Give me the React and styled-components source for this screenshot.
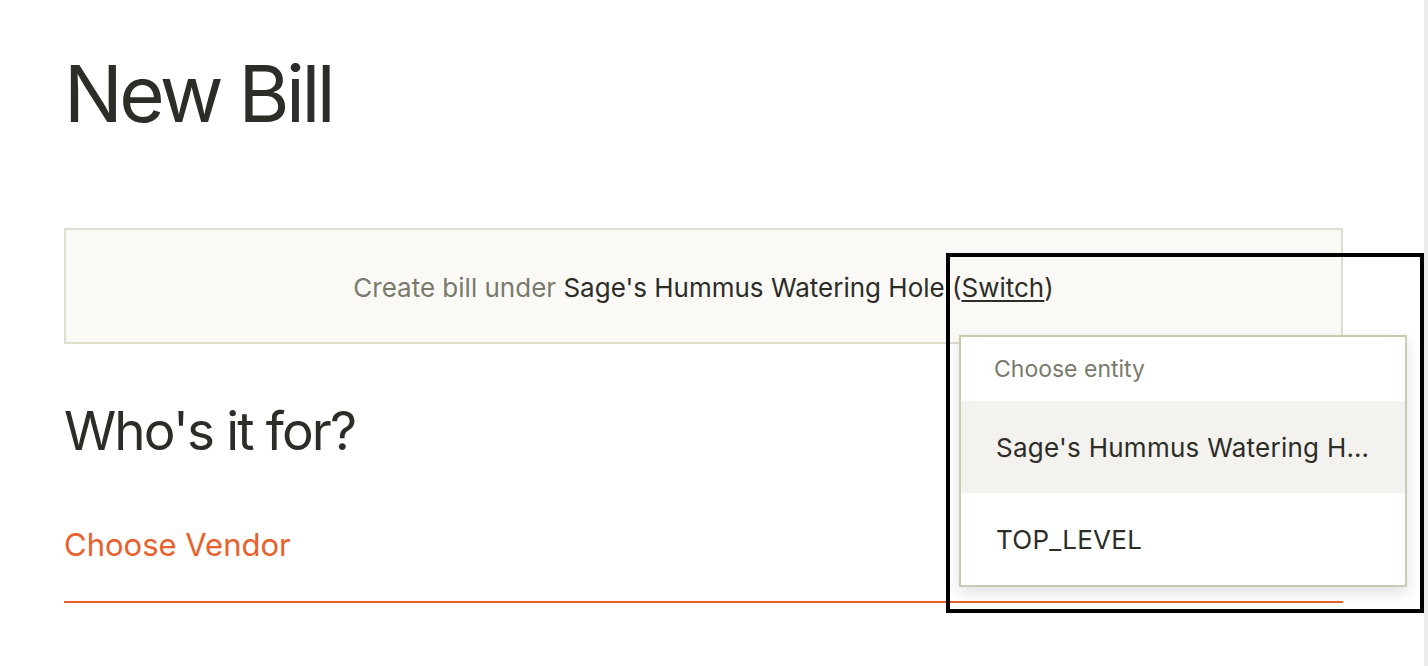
import React from "react";
import styled, { createGlobalStyle } from "styled-components";

const GlobalStyle = createGlobalStyle`
  html, body {
    margin: 0;
    padding: 0;
    background: #ffffff;
    font-family: Inter, "Liberation Sans", sans-serif;
    color: #2d2d27;
  }
  body {
    overflow: hidden;
  }
`;

const entities = ["Sage's Hummus Watering Hole", "TOP_LEVEL"];

export default function App() {
  return (
    <Frame>
      <GlobalStyle />
      <Page>
        <Title>New Bill</Title>

        <EntityBox>
          <EntityLine>
            <Muted>Create bill under </Muted>
            Sage's Hummus Watering Hole (<SwitchLink href="#">Switch</SwitchLink>)
          </EntityLine>

          <Menu>
            <MenuLabel>Choose entity</MenuLabel>
            {entities.map((name, i) => (
              <MenuItem key={name} active={i === 0} title={name}>
                <ItemText>{name}</ItemText>
              </MenuItem>
            ))}
          </Menu>
        </EntityBox>

        <Subtitle>Who's it for?</Subtitle>

        <VendorField>
          <VendorPlaceholder>Choose Vendor</VendorPlaceholder>
        </VendorField>
      </Page>

      <Highlight />
      <Scrollbar />
    </Frame>
  );
}

const Frame = styled.div`
  position: relative;
  width: 1428px;
  height: 666px;
  display: flex;
`;

const Page = styled.main`
  flex: 1;
  padding: 0 81px 0 64px;
  display: flex;
  flex-direction: column;
`;

const Title = styled.h1`
  margin: 50px 0 0;
  font-size: 78px;
  font-weight: 400;
  line-height: 88px;
  letter-spacing: -0.045em;
  color: #2d2d27;
`;

const EntityBox = styled.div`
  position: relative;
  margin-top: 90px;
  height: 116px;
  box-sizing: border-box;
  border: 2px solid #dfddcc;
  background: #faf9f6;
  display: flex;
  align-items: center;
  justify-content: center;
`;

const EntityLine = styled.p`
  margin: 2px 0 0;
  font-size: 26px;
  white-space: pre;
  color: #2d2d27;
`;

const Muted = styled.span`
  color: #7a7a6c;
`;

const SwitchLink = styled.a`
  color: #2d2d27;
  text-decoration: underline;
  text-underline-offset: 3px;
  text-decoration-thickness: 1.5px;
`;

const Menu = styled.div`
  position: absolute;
  top: 105px;
  right: -66px;
  width: 448px;
  box-sizing: border-box;
  border: 2px solid #cacab0;
  background: #ffffff;
  box-shadow: 0 6px 14px rgba(0, 0, 0, 0.12);
  z-index: 2;
`;

const MenuLabel = styled.div`
  height: 64px;
  padding-left: 33px;
  display: flex;
  align-items: center;
  font-size: 23px;
  color: #7a7a6c;
`;

const MenuItem = styled.div`
  height: 92px;
  padding: 0 33px 0 35px;
  display: flex;
  align-items: center;
  background: ${(p) => (p.active ? "#f3f2ee" : "#ffffff")};
`;

const ItemText = styled.span`
  font-size: 26px;
  letter-spacing: 0.01em;
  color: #2d2d27;
  white-space: nowrap;
  overflow: hidden;
  text-overflow: ellipsis;
`;

const Subtitle = styled.h2`
  margin: 52px 0 0;
  font-size: 53px;
  font-weight: 400;
  line-height: 70px;
  letter-spacing: -0.035em;
  color: #2d2d27;
`;

const VendorField = styled.div`
  margin-top: 60px;
  height: 77px;
  box-sizing: border-box;
  border-bottom: 2px solid #e8612c;
`;

const VendorPlaceholder = styled.span`
  font-size: 31px;
  color: #e8612c;
`;

const Highlight = styled.div`
  position: absolute;
  left: 946px;
  top: 253px;
  width: 478px;
  height: 360px;
  box-sizing: border-box;
  border: 4px solid #000000;
  pointer-events: none;
  z-index: 5;
`;

const Scrollbar = styled.div`
  width: 4px;
  background: #ebebeb;
`;
